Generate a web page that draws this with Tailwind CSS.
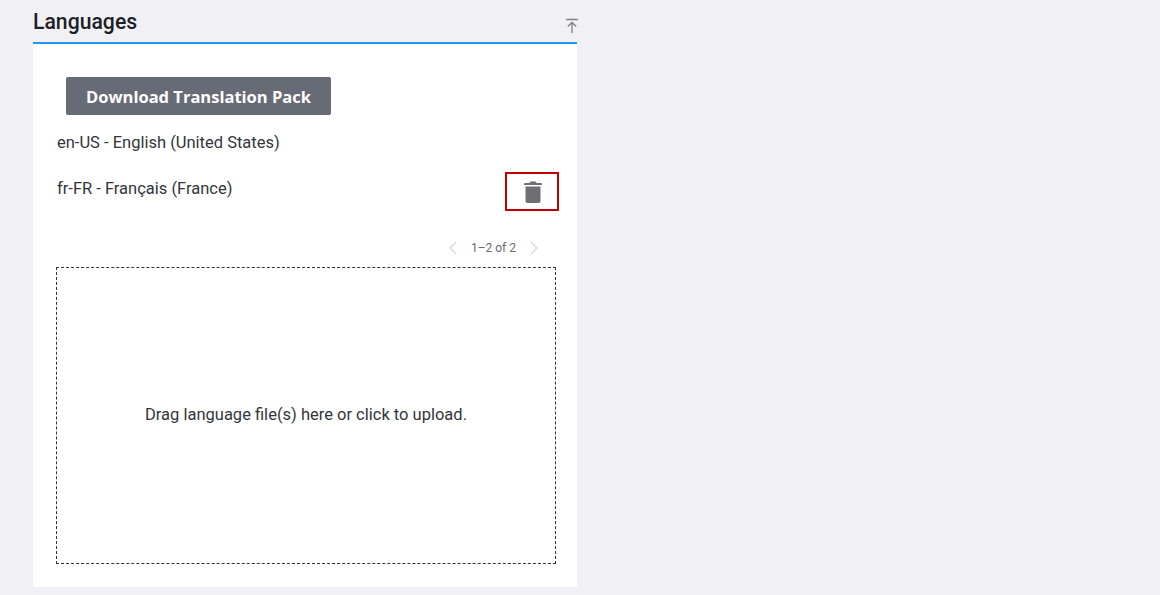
<!DOCTYPE html>
<html lang="en">

<head>
    <meta charset="UTF-8">
    <title>Languages</title>
    <script src="https://cdn.jsdelivr.net/npm/@tailwindcss/browser@4"></script>
</head>

<body class="bg-[#f1f0f5] h-[595px] overflow-hidden font-['Roboto',sans-serif]">
    <section class="ml-[33px] w-[544px]">
        <div class="h-[44px] flex justify-between border-b-2 border-[#2196f3]">
            <h2 class="pt-[9px] text-[21.2px] leading-[26px] font-medium text-[#1c1f26]">Languages</h2>
            <svg class="mt-[18px] -mr-[2px] w-[14px] h-[16px] text-[#7d8088]" viewBox="0 0 14 16" fill="none" stroke="currentColor" stroke-width="1.3">
                <path d="M1 1.500h12M7 15V4.500M2.800 8.500 7 4.500l4.200 4"></path>
            </svg>
        </div>

        <div class="bg-white h-[543px] pl-[23px] pr-[18px] pt-[33px]">
            <button class="ml-[10px] w-[265px] h-[38px] pt-[2px] rounded-[2px] bg-[#676b76] text-white font-['Open_Sans',sans-serif] font-bold text-[16.500px]">Download Translation Pack</button>

            <div class="mt-[15px] ml-px h-[26px] text-[16.500px] leading-[26px] text-[#33353b]">en-US - English (United States)</div>

            <div class="mt-[20px] ml-px flex justify-between items-start">
                <span class="text-[16.500px] leading-[26px] text-[#33353b]">fr-FR - Français (France)</span>
                <button class="-mt-[4px] w-[54px] h-[39px] border-2 border-[#c00000] flex items-center justify-center pl-px">
                    <svg class="w-[18px] h-[22px] text-[#6e6f73]" viewBox="0 0 18 22" fill="currentColor">
                        <path d="M6.500 0.500h5l1 1.500H17a1 1 0 0 1 1 1V4H0V3a1 1 0 0 1 1-1h4.500z"></path>
                        <path d="M1.500 5.500h15V20a2 2 0 0 1-2 2h-11a2 2 0 0 1-2-2z"></path>
                    </svg>
                </button>
            </div>

            <div class="mt-[25px] pr-[20px] flex justify-end items-center gap-[13px] h-[24px] text-[12px] text-[#666a75]">
                <svg class="w-[9px] h-[14px] text-[#d9dade]" viewBox="0 0 9 14" fill="none" stroke="currentColor" stroke-width="1.500"><path d="M8 1 2 7l6 6"></path></svg>
                <span class="mx-[1px]">1–2 of 2</span>
                <svg class="w-[9px] h-[14px] text-[#d9dade]" viewBox="0 0 9 14" fill="none" stroke="currentColor" stroke-width="1.500"><path d="m1 1 6 6-6 6"></path></svg>
            </div>

            <div class="mt-[7px] w-[500px] h-[297px] border border-dashed border-[#333] flex items-center justify-center text-[16.500px] text-[#33353b]">
                Drag language file(s) here or click to upload.
            </div>
        </div>
    </section>
</body>

</html>
